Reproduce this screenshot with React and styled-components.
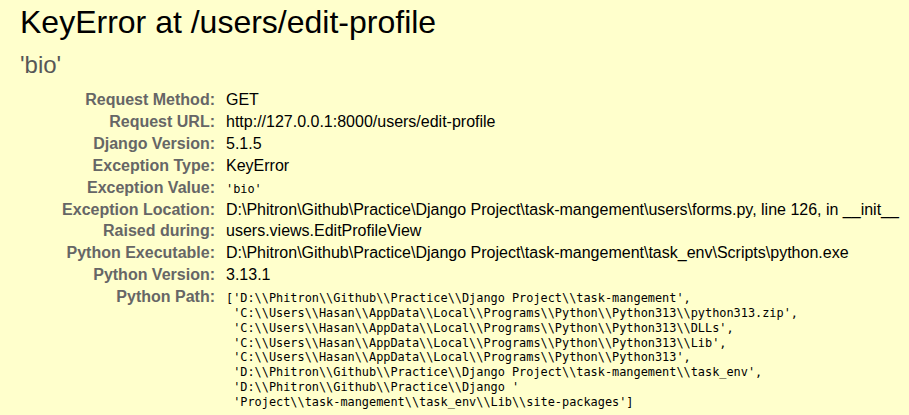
import React from 'react';
import styled, { createGlobalStyle } from 'styled-components';

const GlobalStyle = createGlobalStyle`
    html, body {
        margin: 0;
        padding: 0;
        background: #ffffcc;
    }
    body {
        font-family: "Liberation Sans", Arial, sans-serif;
        font-size: 16px;
        color: #000;
    }
`;

const Summary = styled.div`
    padding: 4px 20px 10px;
    background: #ffffcc;
`;

const Title = styled.h1`
    margin: 0;
    font-size: 32px;
    line-height: 37px;
    font-weight: normal;
    color: #000;
`;

const ExceptionValue = styled.pre`
    margin: 10px 0;
    font-family: "Liberation Sans", Arial, sans-serif;
    font-size: 24px;
    line-height: 28px;
    color: #575757;
`;

const MetaTable = styled.table`
    margin-top: 1px;
    border: none;
    border-collapse: collapse;
    background: transparent;
`;

const Label = styled.th`
    width: 192px;
    min-width: 192px;
    padding: 2px 8px 2px 3px;
    text-align: right;
    vertical-align: baseline;
    font-weight: bold;
    line-height: 17.9px;
    color: #666;
    white-space: nowrap;
`;

const Value = styled.td`
    padding: 2px 3px;
    vertical-align: baseline;
    line-height: 17.9px;
    white-space: nowrap;
`;

const Code = styled.pre`
    margin: 0;
    font-family: "DejaVu Sans Mono", "Liberation Mono", monospace;
    font-size: 11.88px;
    line-height: 14.8px;
    white-space: pre;
    color: #000;
`;

const pythonPath = [
    String.raw`['D:\\Phitron\\Github\\Practice\\Django Project\\task-mangement',`,
    String.raw` 'C:\\Users\\Hasan\\AppData\\Local\\Programs\\Python\\Python313\\python313.zip',`,
    String.raw` 'C:\\Users\\Hasan\\AppData\\Local\\Programs\\Python\\Python313\\DLLs',`,
    String.raw` 'C:\\Users\\Hasan\\AppData\\Local\\Programs\\Python\\Python313\\Lib',`,
    String.raw` 'C:\\Users\\Hasan\\AppData\\Local\\Programs\\Python\\Python313',`,
    String.raw` 'D:\\Phitron\\Github\\Practice\\Django Project\\task-mangement\\task_env',`,
    String.raw` 'D:\\Phitron\\Github\\Practice\\Django '`,
    String.raw` 'Project\\task-mangement\\task_env\\Lib\\site-packages']`,
].join('\n');

const rows = [
    { label: 'Request Method:', value: 'GET' },
    { label: 'Request URL:', value: 'http://127.0.0.1:8000/users/edit-profile' },
    { label: 'Django Version:', value: '5.1.5' },
    { label: 'Exception Type:', value: 'KeyError' },
    { label: 'Exception Value:', code: "'bio'" },
    { label: 'Exception Location:', value: String.raw`D:\Phitron\Github\Practice\Django Project\task-mangement\users\forms.py, line 126, in __init__` },
    { label: 'Raised during:', value: 'users.views.EditProfileView' },
    { label: 'Python Executable:', value: String.raw`D:\Phitron\Github\Practice\Django Project\task-mangement\task_env\Scripts\python.exe` },
    { label: 'Python Version:', value: '3.13.1' },
    { label: 'Python Path:', code: pythonPath },
];

const App = () => {
    return (
        <>
            <GlobalStyle />
            <Summary>
                <Title>KeyError at /users/edit-profile</Title>
                <ExceptionValue>'bio'</ExceptionValue>
                <MetaTable>
                    <tbody>
                        {rows.map((row) => (
                            <tr key={row.label}>
                                <Label scope="row">{row.label}</Label>
                                <Value>
                                    {row.code ? <Code>{row.code}</Code> : row.value}
                                </Value>
                            </tr>
                        ))}
                    </tbody>
                </MetaTable>
            </Summary>
        </>
    );
};

export default App;
